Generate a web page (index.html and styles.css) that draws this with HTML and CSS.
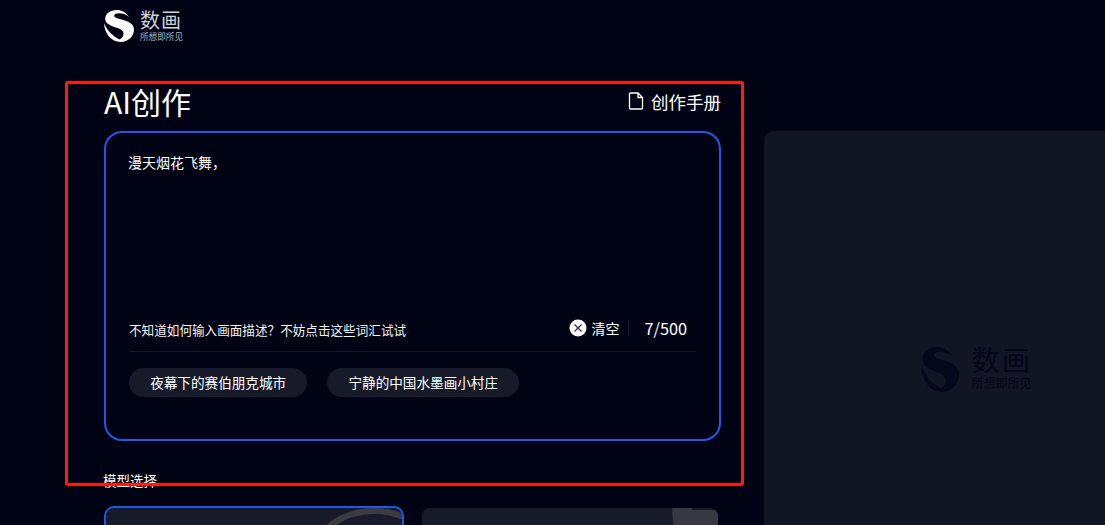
FILE: index.html
```html
<!DOCTYPE html>
<html lang="zh-CN">
<head>
  <meta charset="UTF-8">
  <title>AI创作</title>
  <link rel="stylesheet" href="styles.css">
</head>
<body>
  <svg class="defs" width="0" height="0">
    <symbol id="logo-s" viewBox="0 0 123 135" preserveAspectRatio="none">
      <path d="M103 30C90 10 72 0 52 0 25 0 5 15 5 38c0 20 25 30 50 38 15 5 25 12 25 24 0 12-8 20-16 24C38 112 14 90 0 55c2 45 30 80 68 80 32 0 55-25 55-53 0-24-23-35-51-42-17-5-30-8-30-16 0-7 10-10 20-10 16 0 30 6 41 16Z"/>
    </symbol>
  </svg>

  <div class="page">
    <div class="left">
      <div class="logo">
        <svg class="logo-s" width="30" height="32"><use href="#logo-s"/></svg>
        <div class="logo-text">
          <div class="logo-name">数画</div>
          <div class="logo-slogan">所想即所见</div>
        </div>
      </div>

      <div class="title-row">
        <h1>AI创作</h1>
        <div class="manual">
          <svg viewBox="0 0 16 18" width="16" height="18">
            <path d="M2.500 1h7.500l4.500 4.500v10.500a1 1 0 0 1-1 1h-11a1 1 0 0 1-1-1v-14a1 1 0 0 1 1-1ZM10 1v4.500h4.500" fill="none" stroke="#fff" stroke-width="1.300"/>
          </svg>
          <span>创作手册</span>
        </div>
      </div>

      <div class="prompt-box">
        <div class="prompt-text">漫天烟花飞舞，</div>
        <div class="prompt-bar">
          <span class="hint">不知道如何输入画面描述？不妨点击这些词汇试试</span>
          <div class="tools">
            <svg class="clear-icon" viewBox="0 0 18 18" width="18" height="18">
              <circle cx="9" cy="9" r="8.500" fill="#fff"/>
              <path d="M5.500 5.500l7 7M12.500 5.500l-7 7" stroke="#2b2f4a" stroke-width="1.200"/>
            </svg>
            <span class="clear">清空</span>
            <span class="sep"></span>
            <span class="count">7/500</span>
          </div>
        </div>
        <div class="chips">
          <span class="chip">夜幕下的赛伯朋克城市</span>
          <span class="chip">宁静的中国水墨画小村庄</span>
        </div>
      </div>

      <div class="section-title">模型选择</div>
      <div class="models">
        <div class="model active">
          <svg class="model-art" viewBox="0 0 100 30" width="100" height="30">
            <circle cx="72" cy="76" r="73" fill="none" stroke="#3a3b43" stroke-width="6"/>
          </svg>
        </div>
        <div class="model">
          <svg class="model-art" viewBox="0 0 46 30" width="46" height="30">
            <path d="M0 0h20v2h22a4 4 0 0 1 4 4v24h-44Z" fill="#373841"/>
          </svg>
        </div>
      </div>
    </div>

    <div class="preview">
      <div class="preview-logo">
        <svg class="preview-s" width="38" height="45"><use href="#logo-s"/></svg>
        <div class="logo-text">
          <div class="preview-name">数画</div>
          <div class="preview-slogan">所想即所见</div>
        </div>
      </div>
    </div>
  </div>

  <div class="mark"></div>
</body>
</html>
```
FILE: styles.css
```css
html, body { margin: 0; height: 525px; overflow: hidden; }
body { background: #000314; color: #fff; font-family: "Noto Sans CJK SC", "Liberation Sans", sans-serif; }
.defs { position: absolute; }

.page { display: flex; height: 525px; padding-left: 104px; overflow: hidden; }
.left { width: 617px; flex: none; }

.logo { display: flex; align-items: center; gap: 6px; height: 32px; padding-top: 10px; }
.logo-s { flex: none; fill: #fff; }
.logo-text { display: flex; flex-direction: column; }
.logo-name { font-family: "Liberation Sans", "Noto Sans CJK SC", sans-serif; font-size: 20px; line-height: 22px; letter-spacing: 1px; color: #cfd0d4; }
.logo-slogan { font-family: "Liberation Sans", "Noto Sans CJK SC", sans-serif; font-size: 8.600px; line-height: 10px; color: #b5b6bb; }

.title-row { display: flex; justify-content: space-between; align-items: center; height: 40px; margin-top: 41px; }
h1 { margin: 0 0 4px; font-size: 30px; font-weight: 400; line-height: 36px; }
.manual { display: flex; align-items: center; gap: 7px; margin: 0 0 4px; font-size: 17.500px; }

.prompt-box { box-sizing: border-box; height: 310px; margin-top: 8px; padding: 18px 23px 0; border: 2px solid #2057e6; border-radius: 18px; }
.prompt-text { height: 151px; margin-left: -1px; font-size: 14px; line-height: 22px; }
.prompt-bar { display: flex; justify-content: space-between; align-items: center; height: 47px; padding: 2px 9px 0 0; border-bottom: 1px solid #15172a; }
.hint { margin-top: 4px; font-size: 12.600px; color: #f2f2f2; }
.tools { display: flex; align-items: center; }
.clear-icon { flex: none; }
.clear { margin-left: 4px; font-size: 14px; }
.sep { width: 1px; height: 16px; margin: 0 15px 0 9px; background: #15172a; }
.count { font-size: 16.300px; }

.chips { display: flex; gap: 20px; margin-top: 16px; }
.chip { display: block; height: 29px; padding: 0 21.200px; border-radius: 15px; background: #171a28; font-size: 13.600px; line-height: 29px; }

.section-title { margin: 29px 0 0 -1px; font-size: 13.500px; line-height: 20px; }
.models { display: flex; gap: 16px; margin-top: 16px; }
.model { position: relative; box-sizing: border-box; width: 300px; height: 120px; border: 2px solid transparent; border-radius: 10px; background: #171a28; background-clip: padding-box; overflow: hidden; }
.model.active { border-color: #2057e6; }
.model-art { position: absolute; top: 0; right: 0; }

.preview { flex: none; display: flex; align-items: center; justify-content: center; width: 426px; height: 476px; margin: 131px 0 0 43px; border-radius: 10px 0 0 10px; background: #121524; }
.preview-logo { display: flex; align-items: center; gap: 12px; }
.preview-s { flex: none; fill: #05071a; }
.preview-name { font-family: "Liberation Sans", "Noto Sans CJK SC", sans-serif; font-size: 28px; line-height: 30px; letter-spacing: 2.500px; color: #05071a; }
.preview-slogan { font-family: "Liberation Sans", "Noto Sans CJK SC", sans-serif; font-size: 12px; line-height: 15px; color: #05071a; }

.mark { position: absolute; left: 65px; top: 81px; width: 673px; height: 399px; border: 3px solid #ff1a12; border-radius: 3px; }
```
